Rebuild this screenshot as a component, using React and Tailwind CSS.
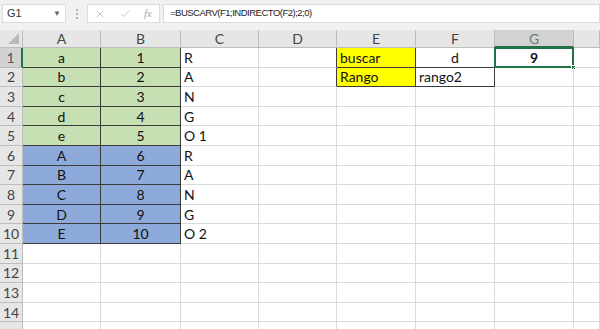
import { X, Check } from "lucide-react";

const cols = ["A", "B", "C", "D", "E", "F", "G", "H"];

const leftData = [
  ["a", "1", "R"],
  ["b", "2", "A"],
  ["c", "3", "N"],
  ["d", "4", "G"],
  ["e", "5", "O 1"],
  ["A", "6", "R"],
  ["B", "7", "A"],
  ["C", "8", "N"],
  ["D", "9", "G"],
  ["E", "10", "O 2"],
];

const GRID = "border-r border-b border-[#dadada]";
const DARK = "border-r border-b border-[#3c3c3c]";

function cellFor(r, c) {
  // r: 1-based row, c: 0-based column index (A=0)
  const row = leftData[r - 1];
  if (row && c < 2) {
    const bg = r <= 5 ? "bg-[#c6e0b4]" : "bg-[#8eaadb]";
    return { text: row[c], cls: `${DARK} ${bg} justify-center` };
  }
  if (row && c === 2) {
    return { text: row[2], cls: `${GRID} justify-start pl-[3px]` };
  }
  if (r <= 2 && c === 3) {
    return { text: "", cls: "border-r border-r-[#3c3c3c] border-b border-b-[#dadada]" };
  }
  if (r === 1 && c === 4) return { text: "buscar", cls: `${DARK} bg-[#ffff00] justify-start pl-[3px]` };
  if (r === 2 && c === 4) return { text: "Rango", cls: `${DARK} bg-[#ffff00] justify-start pl-[3px]` };
  if (r === 1 && c === 5) return { text: "d", cls: `${DARK} justify-center` };
  if (r === 2 && c === 5) return { text: "rango2", cls: `${DARK} justify-start pl-[3px]` };
  if (r === 1 && c === 6) return { text: "9", cls: `${GRID} justify-center font-bold`, selected: true };
  return { text: "", cls: GRID };
}

const FormulaBar = () => (
  <div className="h-[30px] bg-[#f1f1f1] flex items-start pt-[4px] font-['Liberation_Sans',sans-serif]">
    <div className="ml-[2px] w-[64px] h-[19px] bg-white border border-[#dcdcdc] flex items-center justify-between pl-[4px] pr-[4px]">
      <span className="text-[11px] text-[#333]">G1</span>
      <span className="text-[8px] text-[#666]">▼</span>
    </div>
    <div className="w-[21px] h-[19px] flex flex-col items-center justify-center gap-[2px]">
      <span className="w-[2px] h-[2px] bg-[#b5b5b5]"></span>
      <span className="w-[2px] h-[2px] bg-[#b5b5b5]"></span>
      <span className="w-[2px] h-[2px] bg-[#b5b5b5]"></span>
    </div>
    <div className="w-[73px] h-[19px] bg-white border border-[#dcdcdc] flex items-center pl-[6px] gap-[13px] text-[#a8a8a8]">
      <X size={12} strokeWidth={1.3} />
      <Check size={12} strokeWidth={1.3} />
      <span className="font-['Liberation_Serif',serif] italic text-[11px] leading-none">fx</span>
    </div>
    <div className="ml-[3px] flex-1 h-[19px] bg-white border border-[#dcdcdc] flex items-center pl-[6px]">
      <span className="text-[9.5px] tracking-[-0.5px] text-[#222]">=BUSCARV(F1;INDIRECTO(F2);2;0)</span>
    </div>
  </div>
);

export default function App() {
  const rows = Array.from({ length: 15 }, (_, i) => i + 1);
  return (
    <div className="w-[600px] h-[329px] overflow-hidden bg-white">
      <FormulaBar />
      <div className="grid grid-cols-[23px_78px_80px_78px_78px_79px_79px_79px_1fr] font-['Lato',sans-serif] text-[14px] text-[#111]">
        {/* header row */}
        <div className="relative h-[18px] bg-[#e6e6e6] border-r border-b border-[#bdbdbd]">
          <div className="absolute right-[3px] bottom-[3px] w-0 h-0 border-l-[11px] border-l-transparent border-b-[11px] border-b-[#b9b9b9]"></div>
        </div>
        {cols.map((c) =>
          c === "G" ? (
            <div key={c} className="h-[18px] bg-[#d2d2d2] border-r border-[#bdbdbd] border-b-2 border-b-[#217346] flex items-center justify-center text-[#6a7a70]">
              {c}
            </div>
          ) : (
            <div key={c} className="h-[18px] bg-[#e6e6e6] border-r border-b border-[#bdbdbd] flex items-center justify-center text-[#444]">
              {c === "H" ? "" : c}
            </div>
          )
        )}
        {rows.map((r) => (
          <div key={r} className="contents">
            <div
              className={
                r === 1
                  ? "h-[19.6px] bg-[#d2d2d2] border-b border-b-[#bdbdbd] border-r-2 border-r-[#217346] flex items-center justify-center text-[#555]"
                  : "h-[19.6px] bg-[#e6e6e6] border-r border-b border-[#bdbdbd] flex items-center justify-center text-[#444]"
              }
            >
              {r < 15 ? r : ""}
            </div>
            {cols.map((_, c) => {
              const cell = cellFor(r, c);
              return (
                <div key={c} className={`relative h-[19.6px] flex items-center ${cell.cls}`}>
                  {cell.text}
                  {cell.selected && (
                    <div className="absolute -left-[1px] -top-[1px] -right-[1px] -bottom-[1px] border-2 border-[#217346]">
                      <div className="absolute -right-[4px] -bottom-[4px] w-[5px] h-[5px] bg-[#217346] border border-white"></div>
                    </div>
                  )}
                </div>
              );
            })}
          </div>
        ))}
      </div>
    </div>
  );
}
